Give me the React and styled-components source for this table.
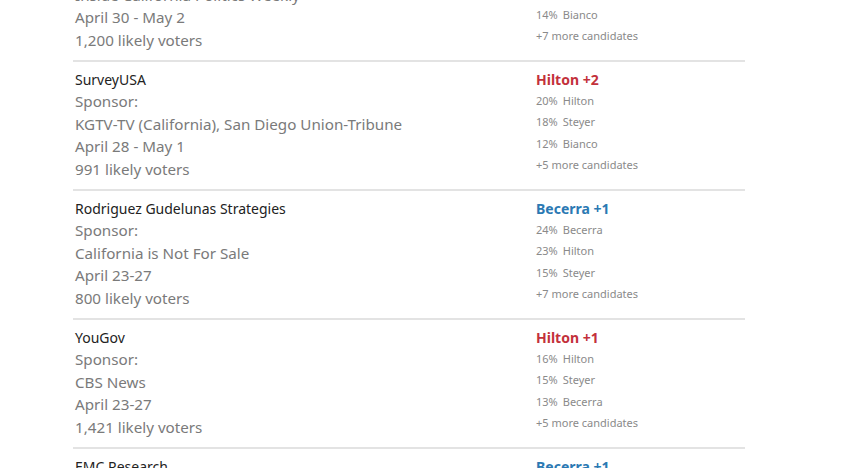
import React from "react";
import styled, { createGlobalStyle } from "styled-components";

const Global = createGlobalStyle`
  html, body { margin: 0; padding: 0; background: #fff; }
  body { font-family: "Noto Sans", "Liberation Sans", sans-serif; overflow: hidden; }
`;

const Page = styled.div`
  width: 850px;
  height: 468px;
  overflow: hidden;
`;

const List = styled.div`
  margin: -69px 0 0 73px;
  width: 672px;
`;

const Row = styled.div`
  display: grid;
  grid-template-columns: 461px 1fr;
  border-top: 2px solid #e3e3e3;
  padding: 8px 0 9px 2px;
`;

const Left = styled.div`
  display: flex;
  flex-direction: column;
`;

const Title = styled.div`
  font-size: 14px;
  line-height: 20px;
  color: #222;
`;

const Meta = styled.div`
  font-size: 15.2px;
  line-height: 22.5px;
  color: #7a7a7a;
  white-space: nowrap;
`;

const Right = styled.div`
  display: flex;
  flex-direction: column;
`;

const Leader = styled.div`
  font-size: 14px;
  line-height: 20px;
  font-weight: 700;
  color: ${(p) => (p.party === "R" ? "#c3313b" : "#2b79b3")};
`;

const Item = styled.div`
  font-size: 11px;
  line-height: 21.3px;
  color: #8a8a8a;
  display: flex;
  gap: 5px;
`;

const polls = [
  {
    name: "Emerson College",
    sponsor: "Inside California Politics Weekly",
    date: "April 30 - May 2",
    sample: "1,200 likely voters",
    leader: "Hilton +1",
    party: "R",
    items: [["17%", "Hilton"], ["16%", "Steyer"], ["14%", "Bianco"]],
    more: 7,
  },
  {
    name: "SurveyUSA",
    sponsor: "KGTV-TV (California), San Diego Union-Tribune",
    date: "April 28 - May 1",
    sample: "991 likely voters",
    leader: "Hilton +2",
    party: "R",
    items: [["20%", "Hilton"], ["18%", "Steyer"], ["12%", "Bianco"]],
    more: 5,
  },
  {
    name: "Rodriguez Gudelunas Strategies",
    sponsor: "California is Not For Sale",
    date: "April 23-27",
    sample: "800 likely voters",
    leader: "Becerra +1",
    party: "D",
    items: [["24%", "Becerra"], ["23%", "Hilton"], ["15%", "Steyer"]],
    more: 7,
  },
  {
    name: "YouGov",
    sponsor: "CBS News",
    date: "April 23-27",
    sample: "1,421 likely voters",
    leader: "Hilton +1",
    party: "R",
    items: [["16%", "Hilton"], ["15%", "Steyer"], ["13%", "Becerra"]],
    more: 5,
  },
  {
    name: "EMC Research",
    sponsor: "Independent",
    date: "April 20-24",
    sample: "1,000 likely voters",
    leader: "Becerra +1",
    party: "D",
    items: [["21%", "Becerra"], ["20%", "Hilton"], ["14%", "Steyer"]],
    more: 6,
  },
];

export default function App() {
  return (
    <Page>
      <Global />
      <List>
        {polls.map((p) => (
          <Row key={p.name}>
            <Left>
              <Title>{p.name}</Title>
              <Meta>Sponsor:</Meta>
              <Meta>{p.sponsor}</Meta>
              <Meta>{p.date}</Meta>
              <Meta>{p.sample}</Meta>
            </Left>
            <Right>
              <Leader party={p.party}>{p.leader}</Leader>
              {p.items.map(([pct, n]) => (
                <Item key={n}>
                  <span>{pct}</span>
                  <span>{n}</span>
                </Item>
              ))}
              <Item>+{p.more} more candidates</Item>
            </Right>
          </Row>
        ))}
      </List>
    </Page>
  );
}
